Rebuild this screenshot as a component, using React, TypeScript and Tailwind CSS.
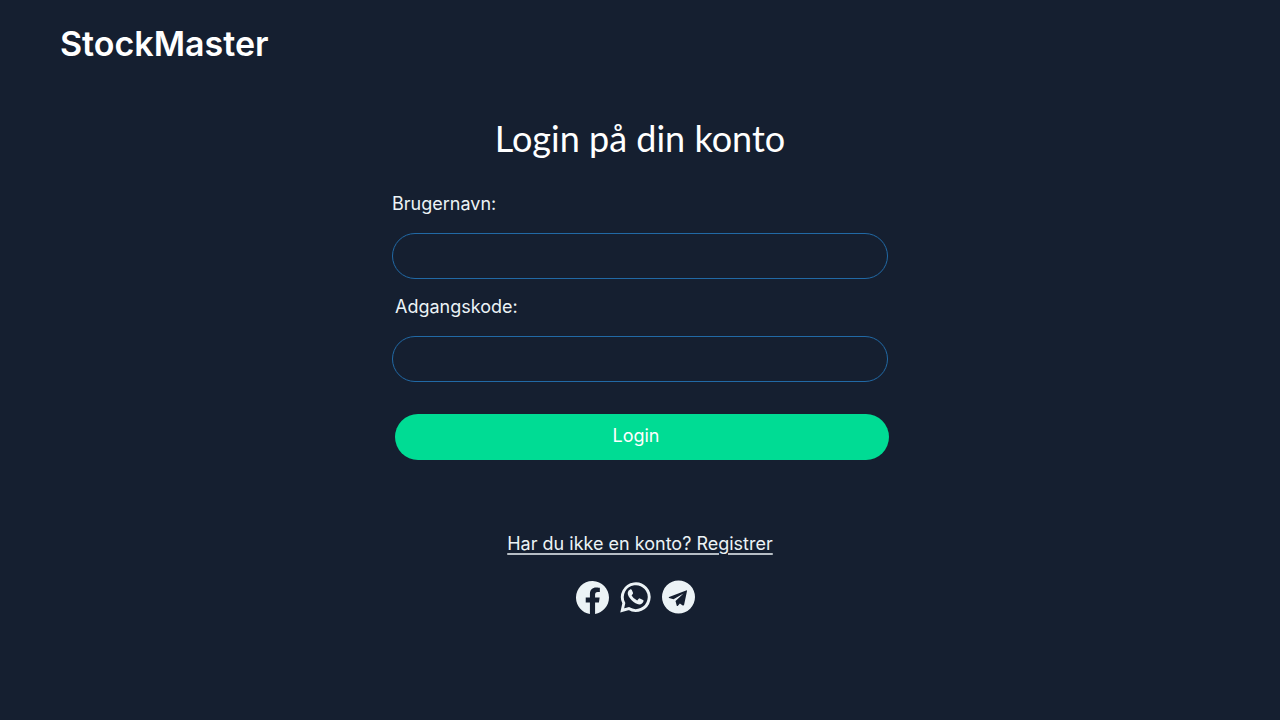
import { BsFacebook } from "react-icons/bs";

const fieldClass =
  "h-[46px] w-full rounded-full border border-[#2169a5] bg-transparent px-6 text-lg text-[#ecf3f6] outline-none focus:border-[#00dc94]";

function WhatsappIcon() {
  return (
    <svg viewBox="0 0 34 34" className="size-[34px]" fill="none" aria-hidden="true">
      <path
        d="M5.8 23.2A13.4 13.4 0 1 1 10.8 28.6L4.2 30.4Z"
        stroke="currentColor"
        strokeWidth="2.9"
        strokeLinejoin="miter"
      />
      <path
        d="M12.4 9.2Q13.3 8.9 13.7 9.8L15 12.8Q15.2 13.5 14.7 14.1L13.6 15.5Q15.5 18.9 19.2 20.5L20.7 18.7Q21.2 18.1 21.9 18.4L25 19.9Q25.8 20.3 25.5 21.2Q24.6 24.3 21.2 24.4Q17.6 24.2 13.6 20.3Q9.8 16.3 9.7 13Q9.8 10.2 12.4 9.2Z"
        fill="currentColor"
      />
    </svg>
  );
}

function TelegramIcon() {
  return (
    <svg viewBox="0 0 34 34" className="size-[34px]" fill="currentColor" fillRule="evenodd" aria-hidden="true">
      <path d="M17.5 .5a16.5 16.5 0 1 0 0 33a16.5 16.5 0 0 0 0-33ZM26 11L23.1 24.8Q22.8 26 21.7 25.4L18.9 23.4L16.7 25.9Q16 26.3 15.7 25.5L14.5 20.9L22.5 13.4L12.5 19.3L8.1 18Q7.2 17.5 8.1 17.1L25.1 10.4Q26.2 10.1 26 11Z" />
    </svg>
  );
}

export default function App() {
  return (
    <div className="min-h-screen bg-[#151f30] font-['Inter',sans-serif] text-lg leading-6 font-normal text-[#ecf3f6]">
      <header className="px-[60px] pt-5">
        <a href="#" className="inline-block text-[34px] leading-12 font-semibold text-white">
          StockMaster
        </a>
      </header>

      <main className="mx-auto flex w-full max-w-[496px] flex-col items-center pt-[46px]">
        <h1 className="font-['Lato',sans-serif] text-4xl leading-12 font-normal text-white">
          Login på din konto
        </h1>

        <form className="flex w-full flex-col pt-[30px]" onSubmit={(e) => e.preventDefault()}>
          <label htmlFor="username">Brugernavn:</label>
          <input id="username" type="text" autoComplete="username" className={`${fieldClass} mt-[17px]`} />
          <label htmlFor="password" className="mt-4 pl-[3px]">
            Adgangskode:
          </label>
          <input id="password" type="password" autoComplete="current-password" className={`${fieldClass} mt-[17px]`} />
          <button type="submit" className="mt-8 -mr-px ml-[3px] h-[46px] rounded-full bg-[#00dc94] pr-3 pb-[3px] text-white">
            Login
          </button>
        </form>

        <a href="#" className="mt-[72px] underline decoration-[#ecf3f6]/75 decoration-2 underline-offset-3">
          Har du ikke en konto? Registrer
        </a>

        <nav aria-label="Sociale medier" className="mt-6 flex items-center gap-[9px] pr-[10px]">
          <a href="#" aria-label="Facebook">
            <BsFacebook size={33} />
          </a>
          <a href="#" aria-label="WhatsApp">
            <WhatsappIcon />
          </a>
          <a href="#" aria-label="Telegram">
            <TelegramIcon />
          </a>
        </nav>
      </main>
    </div>
  );
}
